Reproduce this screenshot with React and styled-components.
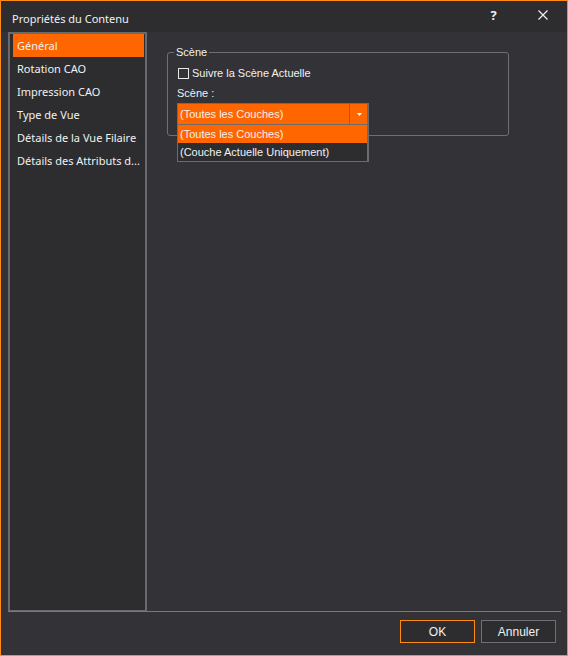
import React from "react";
import styled, { createGlobalStyle } from "styled-components";

const GlobalStyle = createGlobalStyle`
  html, body {
    margin: 0;
    padding: 0;
    background: #333337;
  }
  * {
    box-sizing: border-box;
  }
`;

const pages = [
  "Général",
  "Rotation CAO",
  "Impression CAO",
  "Type de Vue",
  "Détails de la Vue Filaire",
  "Détails des Attributs d...",
];

const layers = ["(Toutes les Couches)", "(Couche Actuelle Uniquement)"];

export default function App() {
  return (
    <Window>
      <GlobalStyle />
      <TitleBar>
        <Title>Propriétés du Contenu</Title>
        <TitleButton>?</TitleButton>
        <TitleButton>
          <svg width="10" height="10" viewBox="0 0 10 10">
            <path d="M0.5 0.5 L9.5 9.5 M9.5 0.5 L0.5 9.5" stroke="#f1f1f1" strokeWidth="1.2" />
          </svg>
        </TitleButton>
      </TitleBar>

      <Main>
        <Sidebar>
          {pages.map((p, i) => (
            <NavItem key={p} $active={i === 0}>
              {p}
            </NavItem>
          ))}
        </Sidebar>

        <Content>
          <Group>
            <Legend>Scène</Legend>
            <CheckRow>
              <CheckBox />
              <span>Suivre la Scène Actuelle</span>
            </CheckRow>
            <FieldLabel>Scène :</FieldLabel>
            <ComboWrap>
              <Combo>
                <ComboValue>(Toutes les Couches)</ComboValue>
                <ComboArrow>
                  <svg width="5" height="3" viewBox="0 0 5 3">
                    <path d="M0 0 H5 L2.5 3 Z" fill="#ffffff" />
                  </svg>
                </ComboArrow>
              </Combo>
              <DropList>
                {layers.map((l, i) => (
                  <DropItem key={l} $active={i === 0}>
                    {l}
                  </DropItem>
                ))}
              </DropList>
            </ComboWrap>
          </Group>
        </Content>
      </Main>

      <Separator />

      <Footer>
        <Button $primary>OK</Button>
        <Button>Annuler</Button>
      </Footer>
    </Window>
  );
}

const Window = styled.div`
  width: 568px;
  height: 656px;
  border: 1px solid #ff8a14;
  background: #333337;
  display: flex;
  flex-direction: column;
  font-family: "Noto Sans", "Liberation Sans", sans-serif;
  font-size: 11px;
  color: #f1f1f1;
`;

const TitleBar = styled.div`
  height: 31px;
  flex-shrink: 0;
  background: #2d2d30;
  display: flex;
  align-items: center;
  padding: 3px 0 0 11px;
`;

const Title = styled.div`
  flex: 1;
  font-size: 11px;
  color: #f1f1f1;
`;

const TitleButton = styled.div`
  width: 49px;
  height: 28px;
  display: flex;
  align-items: center;
  justify-content: center;
  font-size: 13px;
  font-weight: 700;
  color: #f1f1f1;
  margin-top: -7px;
`;

const Main = styled.div`
  flex: 1;
  display: flex;
  padding-left: 7px;
  min-height: 0;
`;

const Sidebar = styled.div`
  width: 139px;
  flex-shrink: 0;
  background: #2d2d30;
  border: 2px solid #6a6a6a;
  border-bottom-width: 1px;
  padding: 0 1px 0 3px;
`;

const NavItem = styled.div`
  height: 23px;
  line-height: 23px;
  padding-left: 4px;
  white-space: nowrap;
  overflow: hidden;
  color: #f1f1f1;
  background: ${(p) => (p.$active ? "#ff6600" : "transparent")};
`;

const Content = styled.div`
  flex: 1;
  padding: 12px 58px 0 20px;
  font-family: "Liberation Sans", Arial, sans-serif;
  font-size: 11px;
`;

const Group = styled.fieldset`
  margin: 0;
  padding: 5px 9px 10px 9px;
  border: 1px solid #6f6f6f;
  border-radius: 3px;
  min-width: 0;
`;

const Legend = styled.legend`
  padding: 0 2px;
  margin-left: -3px;
  line-height: 16px;
  color: #f1f1f1;
`;

const CheckRow = styled.div`
  display: flex;
  align-items: center;
  height: 16px;
  margin-left: 1px;
  gap: 3px;
`;

const CheckBox = styled.span`
  width: 11px;
  height: 11px;
  border: 1px solid #e8e8e8;
  background: transparent;
`;

const FieldLabel = styled.div`
  margin-top: 4px;
  line-height: 16px;
`;

const ComboWrap = styled.div`
  position: relative;
  width: 192px;
  margin-top: 2px;
`;

const Combo = styled.div`
  height: 22px;
  display: flex;
  border: 1px solid #6c6c6c;
  border-right-width: 2px;
  background: #ff6600;
`;

const ComboValue = styled.div`
  flex: 1;
  line-height: 20px;
  padding-left: 2px;
`;

const ComboArrow = styled.div`
  width: 18px;
  border-left: 1px solid #6c6c6c;
  display: flex;
  align-items: center;
  justify-content: center;
  padding-left: 1px;
`;

const DropList = styled.div`
  position: absolute;
  top: 22px;
  left: 0;
  right: 0;
  background: #2d2d30;
  border: 1px solid #6c6c6c;
  border-top: none;
  border-right-width: 2px;
  z-index: 2;
`;

const DropItem = styled.div`
  height: 18px;
  line-height: 18px;
  padding-left: 2px;
  background: ${(p) => (p.$active ? "#ff6600" : "transparent")};
`;

const Separator = styled.div`
  height: 1px;
  margin: 0 6px 0 7px;
  background: #7a7a7a;
  flex-shrink: 0;
`;

const Footer = styled.div`
  height: 43px;
  flex-shrink: 0;
  display: flex;
  justify-content: flex-end;
  gap: 6px;
  padding: 8px 11px 0 0;
  font-family: "Liberation Sans", Arial, sans-serif;
  font-size: 12px;
`;

const Button = styled.div`
  width: 75px;
  height: 23px;
  display: flex;
  align-items: center;
  justify-content: center;
  background: #2d2d30;
  border: 1px solid ${(p) => (p.$primary ? "#ff8a14" : "#707070")};
  color: #f1f1f1;
`;
